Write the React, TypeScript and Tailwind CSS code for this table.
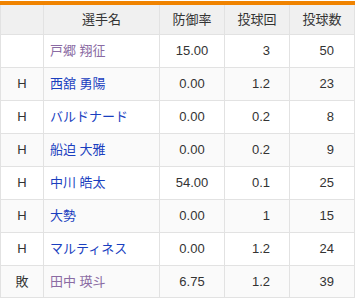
import React from 'react';

interface PitcherRow {
  mark: string;
  name: string;
  visited?: boolean;
  era: string;
  innings: string;
  pitches: string;
}

const rows: PitcherRow[] = [
  { mark: '', name: '戸郷 翔征', visited: true, era: '15.00', innings: '3', pitches: '50' },
  { mark: 'H', name: '西舘 勇陽', era: '0.00', innings: '1.2', pitches: '23' },
  { mark: 'H', name: 'バルドナード', era: '0.00', innings: '0.2', pitches: '8' },
  { mark: 'H', name: '船迫 大雅', era: '0.00', innings: '0.2', pitches: '9' },
  { mark: 'H', name: '中川 皓太', era: '54.00', innings: '0.1', pitches: '25' },
  { mark: 'H', name: '大勢', era: '0.00', innings: '1', pitches: '15' },
  { mark: 'H', name: 'マルティネス', era: '0.00', innings: '1.2', pitches: '24' },
  { mark: '敗', name: '田中 瑛斗', visited: true, era: '6.75', innings: '1.2', pitches: '39' },
];

const cell = 'flex items-center border-r border-[#e2e2e2]';

export default function App() {
  return (
    <div
      className="pt-[1px] bg-white text-[13px] text-[#333]"
      style={{ fontFamily: '"Liberation Sans", "Noto Sans CJK JP", sans-serif' }}
    >
      <div className="w-[355px] border-t-4 border-[#f08300]">
        <div className="flex h-[29px] bg-[#f0f0f0] border-l border-[#e2e2e2]">
          <div className={`${cell} w-[43px]`} />
          <div className={`${cell} w-[116px] justify-center`}>選手名</div>
          <div className={`${cell} w-[65px] justify-center`}>防御率</div>
          <div className={`${cell} w-[65px] justify-center`}>投球回</div>
          <div className={`${cell} w-[65px] justify-center`}>投球数</div>
        </div>
        {rows.map((r, i) => (
          <div
            key={r.name}
            className={`flex h-[33px] border-l border-t border-[#e2e2e2] ${i % 2 === 1 ? 'bg-[#fafafa]' : 'bg-white'} ${i === rows.length - 1 ? 'border-b' : ''}`}
          >
            <div className={`${cell} w-[43px] justify-center`}>{r.mark}</div>
            <div className={`${cell} w-[116px] pl-[6px] ${r.visited ? 'text-[#8a6ba3]' : 'text-[#1a3fbf]'}`}>
              {r.name}
            </div>
            <div className={`${cell} w-[65px] justify-center`}>{r.era}</div>
            <div className={`${cell} w-[65px] justify-end pr-[19px]`}>{r.innings}</div>
            <div className={`${cell} w-[65px] justify-end pr-[20px]`}>{r.pitches}</div>
          </div>
        ))}
      </div>
    </div>
  );
}
